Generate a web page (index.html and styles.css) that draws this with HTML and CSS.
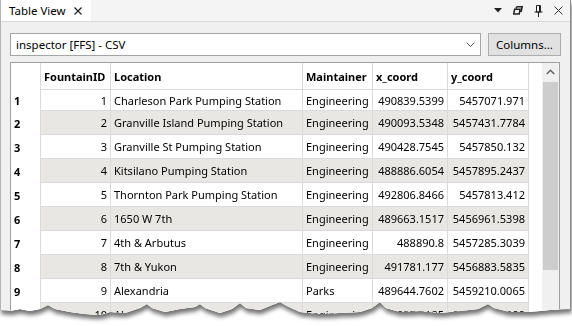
FILE: index.html
```html
<!DOCTYPE html>
<html lang="en">
<head>
    <meta charset="UTF-8">
    <title>Table View</title>
    <link rel="stylesheet" href="styles.css">
</head>
<body>
    <div class="page">
        <div class="window">
            <div class="tabbar">
                <div class="tab">
                    <span class="tab-title">Table View</span>
                    <svg class="tab-close" width="8" height="8" viewBox="0 0 8 8"><path d="M0.5 0.5 L7.5 7.5 M7.5 0.5 L0.5 7.5" stroke="#222" stroke-width="1.2"/></svg>
                </div>
                <div class="tab-tools">
                    <svg width="8" height="5" viewBox="0 0 8 5"><path d="M0 0 H8 L4 4.5 Z" fill="#222"/></svg>
                    <svg width="10" height="9" viewBox="0 0 10 9"><path d="M3.5 0.8 H9.2 L8.2 5.2 H6.6 M3.5 0.8 L3.1 2.6" stroke="#222" stroke-width="1.5" fill="none"/><path d="M1.6 3.3 H7.1 L6.2 8 H0.7 Z" stroke="#222" stroke-width="1.5" fill="none"/></svg>
                    <svg width="9" height="12" viewBox="0 0 9 12"><path d="M2.5 0.5 H6.5 V7 H2.5 Z M0.5 7 H8.5 M4.5 7 V12" stroke="#222" stroke-width="1" fill="none"/><path d="M5.5 0.5 V7" stroke="#222" stroke-width="1"/></svg>
                    <svg width="9" height="9" viewBox="0 0 9 9"><path d="M0.5 0.5 L8.5 8.5 M8.5 0.5 L0.5 8.5" stroke="#333" stroke-width="1"/></svg>
                </div>
            </div>

            <div class="toolbar">
                <div class="source-select">
                    <span>inspector [FFS] - CSV</span>
                    <svg width="9" height="5" viewBox="0 0 9 5"><path d="M0.5 0.5 L4.5 4.5 L8.5 0.5" stroke="#555" stroke-width="1" fill="none"/></svg>
                </div>
                <button class="columns-btn">Columns...</button>
            </div>

            <div class="grid-frame">
                <div class="grid">
                    <div class="grid-row grid-head">
                        <div class="cell row-hdr"></div>
                        <div class="cell">FountainID</div>
                        <div class="cell">Location</div>
                        <div class="cell">Maintainer</div>
                        <div class="cell">x_coord</div>
                        <div class="cell">y_coord</div>
                        <div class="filler"></div>
                    </div>
                    <div class="grid-row first">
                        <div class="cell row-hdr">1</div>
                        <div class="cell num">1</div>
                        <div class="cell">Charleson Park Pumping Station</div>
                        <div class="cell">Engineering</div>
                        <div class="cell num">490839.5399</div>
                        <div class="cell num">5457071.971</div>
                        <div class="filler"></div>
                    </div>
                    <div class="grid-row alt">
                        <div class="cell row-hdr">2</div>
                        <div class="cell num">2</div>
                        <div class="cell">Granville Island Pumping Station</div>
                        <div class="cell">Engineering</div>
                        <div class="cell num">490093.5348</div>
                        <div class="cell num">5457431.7784</div>
                        <div class="filler"></div>
                    </div>
                    <div class="grid-row">
                        <div class="cell row-hdr">3</div>
                        <div class="cell num">3</div>
                        <div class="cell">Granville St Pumping Station</div>
                        <div class="cell">Engineering</div>
                        <div class="cell num">490428.7545</div>
                        <div class="cell num">5457850.132</div>
                        <div class="filler"></div>
                    </div>
                    <div class="grid-row alt">
                        <div class="cell row-hdr">4</div>
                        <div class="cell num">4</div>
                        <div class="cell">Kitsilano Pumping Station</div>
                        <div class="cell">Engineering</div>
                        <div class="cell num">488886.6054</div>
                        <div class="cell num">5457895.2437</div>
                        <div class="filler"></div>
                    </div>
                    <div class="grid-row">
                        <div class="cell row-hdr">5</div>
                        <div class="cell num">5</div>
                        <div class="cell">Thornton Park Pumping Station</div>
                        <div class="cell">Engineering</div>
                        <div class="cell num">492806.8466</div>
                        <div class="cell num">5457813.412</div>
                        <div class="filler"></div>
                    </div>
                    <div class="grid-row alt">
                        <div class="cell row-hdr">6</div>
                        <div class="cell num">6</div>
                        <div class="cell">1650 W 7th</div>
                        <div class="cell">Engineering</div>
                        <div class="cell num">489663.1517</div>
                        <div class="cell num">5456961.5398</div>
                        <div class="filler"></div>
                    </div>
                    <div class="grid-row">
                        <div class="cell row-hdr">7</div>
                        <div class="cell num">7</div>
                        <div class="cell">4th &amp; Arbutus</div>
                        <div class="cell">Engineering</div>
                        <div class="cell num">488890.8</div>
                        <div class="cell num">5457285.3039</div>
                        <div class="filler"></div>
                    </div>
                    <div class="grid-row alt">
                        <div class="cell row-hdr">8</div>
                        <div class="cell num">8</div>
                        <div class="cell">7th &amp; Yukon</div>
                        <div class="cell">Engineering</div>
                        <div class="cell num">491781.177</div>
                        <div class="cell num">5456883.5835</div>
                        <div class="filler"></div>
                    </div>
                    <div class="grid-row">
                        <div class="cell row-hdr">9</div>
                        <div class="cell num">9</div>
                        <div class="cell">Alexandria</div>
                        <div class="cell">Parks</div>
                        <div class="cell num">489644.7602</div>
                        <div class="cell num">5459210.0065</div>
                        <div class="filler"></div>
                    </div>
                    <div class="grid-row alt">
                        <div class="cell row-hdr">10</div>
                        <div class="cell num">10</div>
                        <div class="cell">Alma &amp; Broadway</div>
                        <div class="cell">Engineering</div>
                        <div class="cell num">487337.8185</div>
                        <div class="cell num">5456175.7099</div>
                        <div class="filler"></div>
                    </div>
                </div>
                <div class="vscroll">
                    <svg class="vscroll-up" width="9" height="6" viewBox="0 0 9 6"><path d="M0.8 5 L4.5 1.3 L8.2 5" stroke="#606060" stroke-width="1.4" fill="none"/></svg>
                    <div class="vscroll-thumb"></div>
                </div>
            </div>
        </div>
    </div>
</body>
</html>
```

FILE: styles.css
```css
* {
    margin: 0;
    padding: 0;
    box-sizing: border-box;
}

body {
    background-color: white;
    font-family: "Noto Sans", sans-serif;
    font-size: 11px;
    color: #000;
}

/* shadow under the torn bottom edge */
.page {
    width: 572px;
    height: 326px;
    filter: drop-shadow(1px 4px 2px rgba(0, 0, 0, 0.55));
}

.window {
    width: 571px;
    height: 320px;
    background-color: #f0f0f0;
    border-left: 1px solid #b4b4b4;
    border-right: 1px solid #8c8c8c;
    display: flex;
    flex-direction: column;
    overflow: hidden;
    clip-path: polygon(0 0, 100% 0, 100% 309px, 550px 310px, 530px 312px, 510px 312px, 494px 308px, 488px 304px, 478px 309px, 460px 311px, 440px 313px, 420px 311px, 400px 312px, 386px 308px, 380px 302px, 372px 308px, 360px 312px, 340px 313px, 320px 314px, 300px 312px, 287px 306px, 280px 302px, 272px 305px, 260px 310px, 246px 308px, 240px 303px, 232px 309px, 220px 313px, 205px 308px, 200px 304px, 195px 307px, 180px 309px, 165px 312px, 152px 308px, 147px 304px, 140px 308px, 125px 313px, 110px 312px, 100px 315px, 85px 314px, 70px 312px, 55px 309px, 48px 305px, 40px 309px, 30px 311px, 20px 309px, 10px 311px, 0 310px);
}

.tabbar {
    height: 22px;
    flex-shrink: 0;
    display: flex;
    justify-content: space-between;
    background-color: #f4f4f4;
    border-bottom: 1px solid #d9d9d9;
}

.tab {
    width: 90px;
    display: flex;
    align-items: center;
    justify-content: space-between;
    padding: 0 9px 0 8px;
    background-color: white;
    font-size: 11.5px;
}

.tab-tools {
    display: flex;
    align-items: center;
    gap: 11px;
    padding-right: 7px;
}

.toolbar {
    display: flex;
    gap: 7px;
    padding: 11px 9px 0 9px;
    flex-shrink: 0;
}

.source-select {
    flex: 1;
    height: 23px;
    display: flex;
    align-items: center;
    justify-content: space-between;
    padding: 0 5px 0 5px;
    background-color: white;
    border: 1px solid #a5a5a5;
    font-size: 11.5px;
}

.columns-btn {
    width: 73px;
    height: 23px;
    background-color: #e1e1e1;
    border: 1px solid #adadad;
    font-family: inherit;
    font-size: 11.5px;
    color: #000;
}

.grid-frame {
    margin: 6px 10px 0 9px;
    flex: 1;
    display: flex;
    background-color: white;
    border: 1px solid #a0a0a0;
    border-bottom: none;
}

.grid {
    flex: 1;
}

.grid-row {
    display: grid;
    grid-template-columns: 30px 70px 192px 70px 75px 81px 1fr;
    height: 24px;
}

.grid-head {
    height: 27px;
    font-weight: bold;
}

.grid-row.first {
    height: 21px;
}

.cell {
    display: flex;
    align-items: center;
    padding: 0 3px;
    white-space: nowrap;
    overflow: hidden;
    border-right: 1px solid #dadada;
    border-bottom: 1px solid #dadada;
}

.grid-row.alt .cell {
    background-color: #e8e7e3;
}

.cell.num {
    justify-content: flex-end;
}

.grid-row .cell.row-hdr {
    background-color: white;
    border-bottom: none;
    font-weight: bold;
    padding-left: 3px;
}

.vscroll {
    width: 17px;
    display: flex;
    flex-direction: column;
    align-items: center;
    background-color: #f0f0f0;
}

.vscroll-up {
    margin: 6px 0 7px 0;
}

.vscroll-thumb {
    width: 15px;
    height: 188px;
    background-color: #cdcdcd;
}
```
